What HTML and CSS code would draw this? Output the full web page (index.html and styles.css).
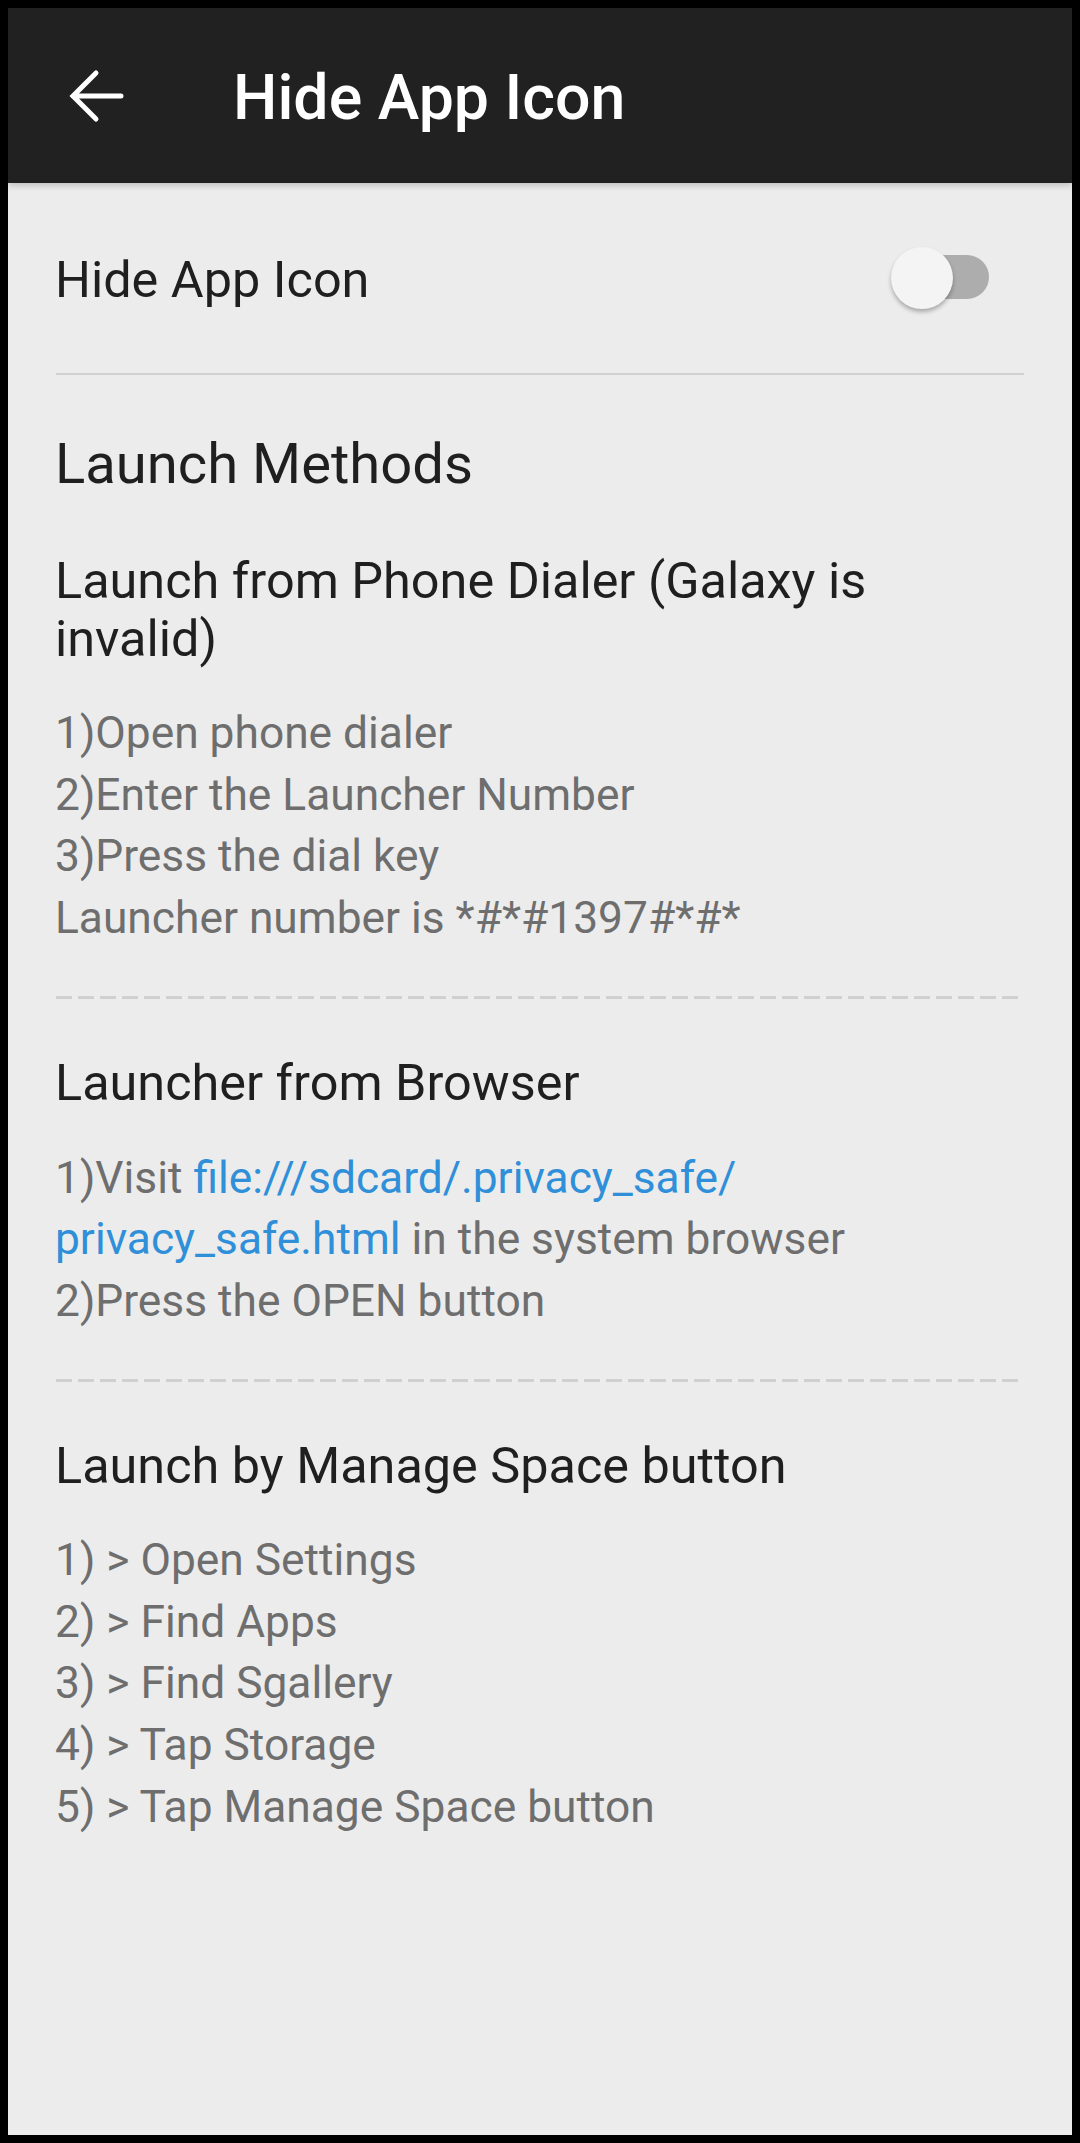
FILE: index.html
```html
<!DOCTYPE html>
<html lang="en">
<head>
<meta charset="utf-8">
<title>Hide App Icon</title>
<link rel="stylesheet" href="styles.css">
</head>
<body>
<div class="screen">
  <header class="toolbar">
    <svg class="back" viewBox="0 0 60 60" aria-hidden="true">
      <path d="M55 30H7M30 7L7 30L30 53" fill="none" stroke="#ffffff" stroke-width="5" stroke-linecap="round" stroke-linejoin="miter"/>
    </svg>
    <h1 class="title">Hide App Icon</h1>
  </header>
  <main class="content">
    <div class="setting-row">
      <span class="setting-label">Hide App Icon</span>
      <div class="switch"><span class="track"></span><span class="thumb"></span></div>
    </div>
    <div class="divider"></div>
    <h2 class="methods-title">Launch Methods</h2>

    <section class="method">
      <h3 class="method-title">Launch from Phone Dialer (Galaxy is invalid)</h3>
      <p class="steps">1)Open phone dialer<br>2)Enter the Launcher Number<br>3)Press the dial key<br>Launcher number is *#*#1397#*#*</p>
    </section>
    <div class="dash"></div>

    <section class="method">
      <h3 class="method-title">Launcher from Browser</h3>
      <p class="steps">1)Visit <span class="link">file:///sdcard/.privacy_safe/<br>privacy_safe.html</span> in the system browser<br>2)Press the OPEN button</p>
    </section>
    <div class="dash"></div>

    <section class="method">
      <h3 class="method-title">Launch by Manage Space button</h3>
      <p class="steps">1) &gt; Open Settings<br>2) &gt; Find Apps<br>3) &gt; Find Sgallery<br>4) &gt; Tap Storage<br>5) &gt; Tap Manage Space button</p>
    </section>
  </main>
</div>
</body>
</html>
```
FILE: styles.css
```css
html, body {
  margin: 0;
  padding: 0;
  background: #000000;
}

.screen {
  margin: 8px;
  width: 1064px;
  height: 2127px;
  background: #ececec;
  overflow: hidden;
  display: flex;
  flex-direction: column;
  font-family: Roboto, "Noto Sans", "Liberation Sans", sans-serif;
}

.toolbar {
  flex: none;
  height: 175px;
  background: #212121;
  display: flex;
  align-items: flex-start;
  position: relative;
  z-index: 1;
  box-shadow: 0 2px 7px rgba(0, 0, 0, 0.22);
}

.back {
  flex: none;
  width: 60px;
  height: 60px;
  margin: 58px 0 0 58px;
}

.title {
  margin: 55px 0 0 107px;
  font-size: 62.6px;
  line-height: 70px;
  font-weight: 500;
  color: #ffffff;
}

.content {
  flex: 1;
  padding: 0 48px 0 47px;
}

.setting-row {
  display: flex;
  justify-content: space-between;
  align-items: flex-start;
  padding: 68.8px 0 64.2px;
}

.setting-label {
  font-size: 50.4px;
  line-height: 56px;
  color: #1f1f1f;
}

.switch {
  position: relative;
  flex: none;
  width: 102px;
  height: 62px;
  margin: -4.8px 35px 0 0;
}

.track {
  position: absolute;
  left: 10px;
  right: 0;
  top: 8px;
  height: 44px;
  border-radius: 22px;
  background: #adadad;
}

.thumb {
  position: absolute;
  left: 4px;
  top: 0;
  width: 62px;
  height: 62px;
  border-radius: 50%;
  background: #f4f4f4;
  box-shadow: 0 3px 4px rgba(0, 0, 0, 0.28);
}

.divider {
  height: 2px;
  margin-left: 1px;
  background: #d0d0d0;
}

.methods-title {
  margin: 56.8px 0 0;
  font-size: 56.2px;
  line-height: 64px;
  font-weight: 400;
  color: #1f1f1f;
}

.method-title {
  margin: 56px 0 0;
  font-size: 50.4px;
  line-height: 58px;
  font-weight: 400;
  color: #1f1f1f;
}

.method + .dash + .method .method-title {
  margin-top: 55px;
}

.steps {
  margin: 35.2px 0 0;
  font-size: 44.3px;
  line-height: 61.6px;
  color: #6e6e6e;
}

.link {
  color: #2f8fd8;
}

.dash {
  height: 3px;
  margin: 46.8px 0 0 1px;
  background: repeating-linear-gradient(to right, #d0d0d0 0, #d0d0d0 16px, transparent 16px, transparent 22px);
}
```
